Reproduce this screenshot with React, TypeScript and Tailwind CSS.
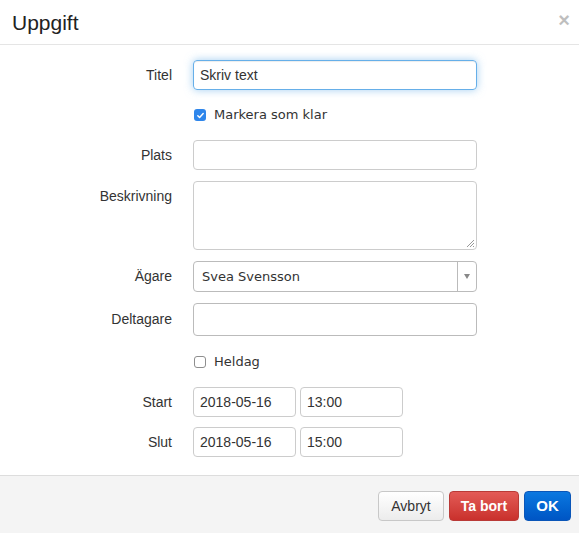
import React from "react";

const font = { fontFamily: '"Liberation Sans", Arial, sans-serif' };
const lucida = { fontFamily: '"DejaVu Sans", sans-serif', fontSize: 13 };

function Check({ on }: { on: boolean }) {
  if (on) {
    return (
      <span className="flex h-[12px] w-[12px] items-center justify-center rounded-[3px] bg-[#2f86eb]">
        <svg width="9" height="9" viewBox="0 0 10 10" fill="none">
          <path d="M2 5.2l2 2L8 2.8" stroke="#fff" strokeWidth="1.6" strokeLinecap="round" strokeLinejoin="round" />
        </svg>
      </span>
    );
  }
  return <span className="block h-[12px] w-[12px] rounded-[3px] border border-[#8e8e8e] bg-white" />;
}

function Row({ label, children, top }: { label?: string; children: React.ReactNode; top?: boolean }) {
  return (
    <div className={`flex gap-[21px] ${top ? "items-start" : "items-center"}`}>
      <div className={`w-[172px] shrink-0 text-right text-[14px] text-[#333] ${top ? "pt-[5px]" : ""}`}>{label}</div>
      {children}
    </div>
  );
}

export default function App() {
  return (
    <div className="h-[533px] w-[579px] bg-white text-[#333]" style={font}>
      {/* Header */}
      <div className="flex h-[45px] items-center justify-between border-b border-[#e5e5e5] pl-[12px] pr-[9px]">
        <h4 className="text-[21px] leading-none text-[#222]">Uppgift</h4>
        <span className="pb-[4px] text-[20px] font-bold leading-none text-black opacity-25">×</span>
      </div>

      {/* Body */}
      <div className="flex h-[430px] flex-col pt-[15px]">
        <Row label="Titel">
          <div className="flex h-[30px] w-[284px] items-center rounded-[4px] border border-[#66afe9] px-[6px] text-[14px] text-[#333] shadow-[inset_0_1px_1px_rgba(0,0,0,0.075),0_0_8px_rgba(102,175,233,0.6)]">
            Skriv text
          </div>
        </Row>

        <Row>
          <div className="mt-[10px] flex h-[30px] items-center gap-[8px] pl-[1px]">
            <Check on />
            <span className="text-[#333]" style={lucida}>
              Markera som klar
            </span>
          </div>
        </Row>

        <div className="mt-[10px]">
          <Row label="Plats">
            <div className="h-[30px] w-[284px] rounded-[4px] border border-[#ccc]" />
          </Row>
        </div>

        <div className="mt-[11px]">
          <Row label="Beskrivning" top>
            <div className="relative h-[69px] w-[284px] rounded-[4px] border border-[#ccc]">
              <svg className="absolute bottom-[1px] right-[1px]" width="9" height="9" viewBox="0 0 9 9">
                <path d="M8 1L1 8M8 4L4 8M8 7L7 8" stroke="#999" strokeWidth="1" />
              </svg>
            </div>
          </Row>
        </div>

        <div className="mt-[11px]">
          <Row label="Ägare">
            <div className="flex h-[31px] w-[284px] items-center rounded-[4px] border border-[#bbb]">
              <span className="flex-1 pl-[8px] text-[#333]" style={lucida}>
                Svea Svensson
              </span>
              <span className="flex h-full w-[19px] items-center justify-center border-l border-[#bbb]">
                <svg width="6" height="5" viewBox="0 0 6 5">
                  <path d="M0 0h6L3 5z" fill="#888" />
                </svg>
              </span>
            </div>
          </Row>
        </div>

        <div className="mt-[11px]">
          <Row label="Deltagare">
            <div className="h-[33px] w-[284px] rounded-[4px] border border-[#bbb]" />
          </Row>
        </div>

        <Row>
          <div className="mt-[11px] flex h-[30px] items-center gap-[8px] pl-[1px]">
            <Check on={false} />
            <span className="text-[#333]" style={lucida}>
              Heldag
            </span>
          </div>
        </Row>

        <div className="mt-[10px]">
          <Row label="Start">
            <div className="flex gap-[4px]">
              <div className="flex h-[30px] w-[103px] items-center rounded-[4px] border border-[#ccc] px-[6px] text-[14px]">2018-05-16</div>
              <div className="flex h-[30px] w-[103px] items-center rounded-[4px] border border-[#ccc] px-[6px] text-[14px]">13:00</div>
            </div>
          </Row>
        </div>

        <div className="mt-[10px]">
          <Row label="Slut">
            <div className="flex gap-[4px]">
              <div className="flex h-[30px] w-[103px] items-center rounded-[4px] border border-[#ccc] px-[6px] text-[14px]">2018-05-16</div>
              <div className="flex h-[30px] w-[103px] items-center rounded-[4px] border border-[#ccc] px-[6px] text-[14px]">15:00</div>
            </div>
          </Row>
        </div>
      </div>

      {/* Footer */}
      <div className="flex h-[58px] items-start justify-end gap-[5px] border-t border-[#ddd] bg-[#f4f4f4] pr-[8px] pt-[15px]">
        <button className="h-[30px] w-[66px] rounded-[4px] border border-[#c8c8c8] bg-gradient-to-b from-white to-[#ececec] text-[14px] text-[#333]">
          Avbryt
        </button>
        <button className="h-[30px] w-[70px] rounded-[4px] border border-[#b93a37] bg-gradient-to-b from-[#e35a56] to-[#c9302c] text-[14px] font-bold text-white">
          Ta bort
        </button>
        <button className="h-[30px] w-[47px] rounded-[4px] border border-[#0a56b8] bg-gradient-to-b from-[#0c78e0] to-[#0055c4] text-[15px] font-bold text-white">
          OK
        </button>
      </div>
    </div>
  );
}
